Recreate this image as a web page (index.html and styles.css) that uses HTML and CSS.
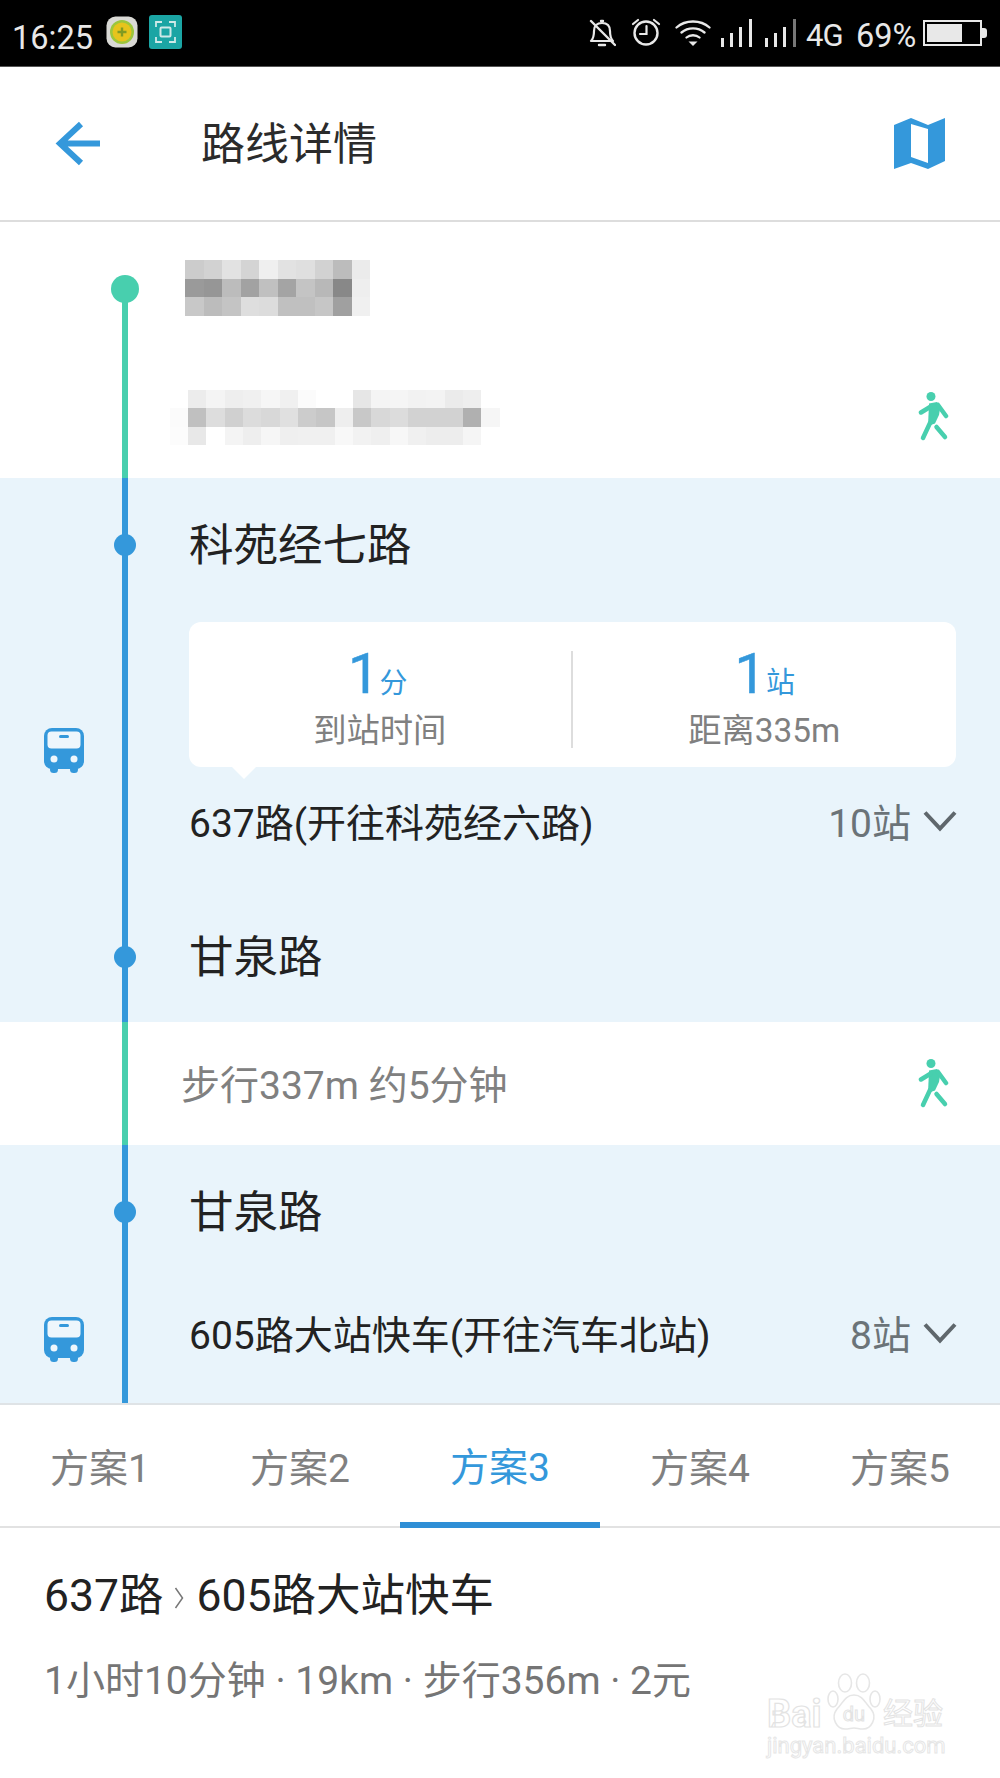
FILE: index.html
```html
<!DOCTYPE html>
<html lang="zh-CN">
<head>
<meta charset="utf-8">
<title>路线详情</title>
<link rel="stylesheet" href="styles.css">
</head>
<body>
<div class="phone">
  <div class="statusbar">
    <div class="status-left">
      <span class="clock">16:25</span>
      <svg class="app-icon app-360" viewBox="0 0 32 32"><rect x="0.5" y="0.5" width="31" height="31" rx="9" fill="#d9d9d5"/><circle cx="16" cy="16" r="12" fill="#9cc63c"/><circle cx="16" cy="16" r="9.5" fill="#e6c41c"/><path d="M16 11.5v9M11.5 16h9" stroke="#7f9a22" stroke-width="2.4"/></svg>
      <svg class="app-icon app-scan" viewBox="0 0 33 34"><rect width="33" height="34" rx="3" fill="#1ba5a4"/><path d="M7 12V7h6M20 7h6v5M26 22v5h-6M13 27H7v-5" fill="none" stroke="#cfe9e8" stroke-width="1.8"/><rect x="11.5" y="12.5" width="10" height="9" rx="1" fill="none" stroke="#cfe9e8" stroke-width="2"/></svg>
    </div>
    <div class="status-right">
      <svg class="st-icon st-bell" viewBox="0 0 28 30"><path d="M3 23c3-3 3-6 3-10 0-5 3-8 8-8s8 3 8 8c0 4 0 7 3 10z" fill="none" stroke="#e8e8e8" stroke-width="2.2" stroke-linejoin="round"/><path d="M11 27h6M13 3h2M3 3l24 24" stroke="#e8e8e8" stroke-width="2.4" stroke-linecap="round"/></svg>
      <svg class="st-icon st-alarm" viewBox="0 0 30 30"><circle cx="15" cy="16" r="11.5" fill="none" stroke="#e8e8e8" stroke-width="2.4"/><path d="M15.500 9v8H9M2 7l5-4M28 7l-5-4" fill="none" stroke="#e8e8e8" stroke-width="2.2" stroke-linecap="round"/></svg>
      <svg class="st-icon st-wifi" viewBox="0 0 36 28"><path d="M1.500 9.500C10.500 1.500 25.500 1.500 34.500 9.500M6.500 14.500C13 9 23 9 29.500 14.500M11.500 19.500c3.500-3 9.500-3 13 0" fill="none" stroke="#e8e8e8" stroke-width="2.300" stroke-linecap="round"/><path d="M13.500 23.500h9L18 28z" fill="#e8e8e8"/></svg>
      <svg class="st-icon st-signal" viewBox="0 0 32 28"><path d="M0 19h3v9H0zM9 14h3v14H9zM18 8h3v20h-3zM28 0h3v28h-3z" fill="#e8e8e8"/></svg>
      <svg class="st-icon st-signal2" viewBox="0 0 32 28"><path d="M0 19h3v9H0zM9 14h3v14H9zM18 8h3v20h-3z" fill="#e8e8e8"/><path d="M28 0h3v28h-3z" fill="#777"/></svg>
      <span class="st-net">4G</span>
      <span class="st-batt">69%</span>
      <div class="battery"><div class="battery-level"></div></div>
      <div class="battery-nub"></div>
    </div>
  </div>

  <header class="topbar">
    <svg class="back" viewBox="0 0 46 46"><path d="M45 22.500H5M26 3 5 22.500 26 42" fill="none" stroke="#3498db" stroke-width="6"/></svg>
    <h1 class="title">路线详情</h1>
    <svg class="map-icon" viewBox="0 0 51 51"><path fill-rule="evenodd" fill="#3498db" d="M0 7 17 0l17 7 17-7v43l-17 8-17-6-17 6zM17 6v33l17 6V11z"/></svg>
  </header>

  <section class="leg leg-walk">
    <div class="rail rail-green rail-from-dot"></div>
    <div class="row row-start">
      <div class="gutter"><span class="dot dot-start"></span></div>
      <svg class="mosaic mosaic-a" viewBox="0 0 10 3" shape-rendering="crispEdges">
        <rect x="0" y="0" width="1" height="1" fill="#ccc"/><rect x="1" y="0" width="1" height="1" fill="#d2d2d2"/><rect x="2" y="0" width="1" height="1" fill="#e2e2e2"/><rect x="3" y="0" width="1" height="1" fill="#d4d4d4"/><rect x="4" y="0" width="1" height="1" fill="#efefef"/><rect x="5" y="0" width="1" height="1" fill="#e2e2e2"/><rect x="6" y="0" width="1" height="1" fill="#dfdfdf"/><rect x="7" y="0" width="1" height="1" fill="#d2d2d2"/><rect x="8" y="0" width="1" height="1" fill="#bcbcbc"/><rect x="9" y="0" width="1" height="1" fill="#ebebeb"/>
        <rect x="0" y="1" width="1" height="1" fill="#9a9a9a"/><rect x="1" y="1" width="1" height="1" fill="#969696"/><rect x="2" y="1" width="1" height="1" fill="#bcbcbc"/><rect x="3" y="1" width="1" height="1" fill="#a2a2a2"/><rect x="4" y="1" width="1" height="1" fill="#c0c0c0"/><rect x="5" y="1" width="1" height="1" fill="#a4a4a4"/><rect x="6" y="1" width="1" height="1" fill="#c4c4c4"/><rect x="7" y="1" width="1" height="1" fill="#b8b8b8"/><rect x="8" y="1" width="1" height="1" fill="#888"/><rect x="9" y="1" width="1" height="1" fill="#eee"/>
        <rect x="0" y="2" width="1" height="1" fill="#c8c8c8"/><rect x="1" y="2" width="1" height="1" fill="#bcbcbc"/><rect x="2" y="2" width="1" height="1" fill="#c4c4c4"/><rect x="3" y="2" width="1" height="1" fill="#dedede"/><rect x="4" y="2" width="1" height="1" fill="#dcdcdc"/><rect x="5" y="2" width="1" height="1" fill="#c0c0c0"/><rect x="6" y="2" width="1" height="1" fill="#c0c0c0"/><rect x="7" y="2" width="1" height="1" fill="#c6c6c6"/><rect x="8" y="2" width="1" height="1" fill="#a0a0a0"/><rect x="9" y="2" width="1" height="1" fill="#f0f0f0"/>
      </svg>
    </div>
    <div class="row row-place">
      <svg class="mosaic mosaic-b" viewBox="0 0 18 3" shape-rendering="crispEdges">
        <rect x="1" y="0" width="1" height="1" fill="#ececec"/><rect x="2" y="0" width="1" height="1" fill="#f4f4f4"/><rect x="3" y="0" width="1" height="1" fill="#eee"/><rect x="4" y="0" width="1" height="1" fill="#f0f0f0"/><rect x="5" y="0" width="1" height="1" fill="#f6f6f6"/><rect x="6" y="0" width="1" height="1" fill="#f0f0f0"/><rect x="7" y="0" width="1" height="1" fill="#fbfbfb"/><rect x="10" y="0" width="1" height="1" fill="#e6e6e6"/><rect x="11" y="0" width="1" height="1" fill="#f4f4f4"/><rect x="12" y="0" width="1" height="1" fill="#f5f5f5"/><rect x="13" y="0" width="1" height="1" fill="#f2f2f2"/><rect x="14" y="0" width="1" height="1" fill="#f3f3f3"/><rect x="15" y="0" width="1" height="1" fill="#ebebeb"/><rect x="16" y="0" width="1" height="1" fill="#eee"/>
        <rect x="0" y="1" width="1" height="1" fill="#fbfbfb"/><rect x="1" y="1" width="1" height="1" fill="#c0c0c0"/><rect x="2" y="1" width="1" height="1" fill="#ddd"/><rect x="3" y="1" width="1" height="1" fill="#d0d0d0"/><rect x="4" y="1" width="1" height="1" fill="#dcdcdc"/><rect x="5" y="1" width="1" height="1" fill="#d8d8d8"/><rect x="6" y="1" width="1" height="1" fill="#e0e0e0"/><rect x="7" y="1" width="1" height="1" fill="#ccc"/><rect x="8" y="1" width="1" height="1" fill="#c6c6c6"/><rect x="9" y="1" width="1" height="1" fill="#eee"/><rect x="10" y="1" width="1" height="1" fill="#c8c8c8"/><rect x="11" y="1" width="1" height="1" fill="#d8d8d8"/><rect x="12" y="1" width="1" height="1" fill="#dcdcdc"/><rect x="13" y="1" width="1" height="1" fill="#d2d2d2"/><rect x="14" y="1" width="1" height="1" fill="#d2d2d2"/><rect x="15" y="1" width="1" height="1" fill="#d2d2d2"/><rect x="16" y="1" width="1" height="1" fill="#b0b0b0"/><rect x="17" y="1" width="1" height="1" fill="#f6f6f6"/>
        <rect x="0" y="2" width="1" height="1" fill="#fcfcfc"/><rect x="1" y="2" width="1" height="1" fill="#e8e8e8"/><rect x="3" y="2" width="1" height="1" fill="#f4f4f4"/><rect x="4" y="2" width="1" height="1" fill="#eee"/><rect x="5" y="2" width="1" height="1" fill="#f6f6f6"/><rect x="6" y="2" width="1" height="1" fill="#efefef"/><rect x="7" y="2" width="1" height="1" fill="#f0f0f0"/><rect x="8" y="2" width="1" height="1" fill="#f0f0f0"/><rect x="9" y="2" width="1" height="1" fill="#f8f8f8"/><rect x="10" y="2" width="1" height="1" fill="#f2f2f2"/><rect x="11" y="2" width="1" height="1" fill="#efefef"/><rect x="12" y="2" width="1" height="1" fill="#f7f7f7"/><rect x="13" y="2" width="1" height="1" fill="#f0f0f0"/><rect x="14" y="2" width="1" height="1" fill="#ededed"/><rect x="15" y="2" width="1" height="1" fill="#ededed"/><rect x="16" y="2" width="1" height="1" fill="#f5f5f5"/>
      </svg>
      <svg class="walker" viewBox="0 0 31 50"><use href="#walk-figure"/></svg>
    </div>
  </section>

  <section class="leg leg-bus leg-bus-a">
    <div class="rail rail-blue"></div>
    <div class="row row-station">
      <div class="gutter"><span class="dot"></span></div>
      <span class="station">科苑经七路</span>
    </div>
    <div class="transit">
      <div class="gutter gutter-bus">
        <svg class="bus" viewBox="0 0 40 45"><use href="#bus-figure"/></svg>
      </div>
      <div class="transit-body">
        <div class="card">
          <div class="card-cell">
            <div class="metric"><span class="metric-num">1</span><span class="metric-unit">分</span></div>
            <div class="metric-label">到站时间</div>
          </div>
          <div class="card-divider"></div>
          <div class="card-cell">
            <div class="metric"><span class="metric-num">1</span><span class="metric-unit">站</span></div>
            <div class="metric-label">距离335m</div>
          </div>
        </div>
        <div class="route">
          <span class="route-name">637路(开往科苑经六路)</span>
          <span class="route-stops">10站</span>
          <svg class="chev" viewBox="0 0 34 22"><path d="M2 2.500l15 16 15-16" fill="none" stroke="#5f676c" stroke-width="4"/></svg>
        </div>
      </div>
    </div>
    <div class="row row-station row-station-end">
      <div class="gutter"><span class="dot"></span></div>
      <span class="station">甘泉路</span>
    </div>
  </section>

  <section class="leg leg-walk leg-walk-mid">
    <div class="rail rail-green"></div>
    <div class="row row-walk">
      <span class="walk-text">步行337m 约5分钟</span>
      <svg class="walker" viewBox="0 0 31 50"><use href="#walk-figure"/></svg>
    </div>
  </section>

  <section class="leg leg-bus leg-bus-b">
    <div class="rail rail-blue"></div>
    <div class="row row-station row-station-b">
      <div class="gutter"><span class="dot"></span></div>
      <span class="station">甘泉路</span>
    </div>
    <div class="transit transit-b">
      <div class="gutter gutter-bus">
        <svg class="bus" viewBox="0 0 40 45"><use href="#bus-figure"/></svg>
      </div>
      <div class="transit-body">
        <div class="route route-b">
          <span class="route-name">605路大站快车(开往汽车北站)</span>
          <span class="route-stops">8站</span>
          <svg class="chev" viewBox="0 0 34 22"><path d="M2 2.500l15 16 15-16" fill="none" stroke="#5f676c" stroke-width="4"/></svg>
        </div>
      </div>
    </div>
  </section>

  <nav class="tabs">
    <div class="tab">方案1</div>
    <div class="tab">方案2</div>
    <div class="tab tab-active">方案3</div>
    <div class="tab">方案4</div>
    <div class="tab">方案5</div>
  </nav>

  <footer class="summary">
    <div class="summary-title"><span>637路</span><svg class="summary-sep" viewBox="0 0 10 24"><path d="M1.500 2l7 10-7 10" fill="none" stroke="#777" stroke-width="1.500"/></svg><span>605路大站快车</span></div>
    <div class="summary-sub">1小时10分钟 · 19km · 步行356m · 2元</div>
    <div class="watermark">
      <div class="wm-top">
        <span class="wm-text">Bai</span>
        <svg class="wm-paw" viewBox="0 0 54 58"><g fill="#fff" stroke="#e6e6e6" stroke-width="1.600"><ellipse cx="6" cy="26" rx="5" ry="8"/><ellipse cx="18" cy="10" rx="6.500" ry="9"/><ellipse cx="36" cy="10" rx="6.500" ry="9"/><ellipse cx="48" cy="26" rx="5" ry="8"/><path d="M27 22c9 0 11 8 17 14 7 9 0 20-8 20-4 0-6-1-9-1s-5 1-9 1c-8 0-15-11-8-20 6-6 8-14 17-14z"/></g><text x="27" y="48" text-anchor="middle" class="wm-du">du</text></svg>
        <span class="wm-text wm-cjk">经验</span>
      </div>
      <div class="wm-url">jingyan.baidu.com</div>
    </div>
  </footer>
</div>

<svg class="defs" width="0" height="0">
  <defs>
    <g id="bus-figure">
      <rect x="0" y="0" width="40" height="41" rx="8" fill="#3498db"/>
      <rect x="3.500" y="3.500" width="33" height="17" rx="4" fill="#eef6fc"/>
      <rect x="15" y="7" width="10" height="3" rx="1.500" fill="#3498db"/>
      <circle cx="10" cy="31" r="3.500" fill="#eef6fc"/>
      <circle cx="30" cy="31" r="3.500" fill="#eef6fc"/>
      <rect x="6" y="38" width="8" height="7" rx="3.500" fill="#3498db"/>
      <rect x="26" y="38" width="8" height="7" rx="3.500" fill="#3498db"/>
    </g>
    <g id="walk-figure" fill="#48cfae">
      <circle cx="13" cy="4.500" r="4.500"/>
      <path d="M11 11.500 19 10 22.500 14 21 23 17 31.500 10 34z"/>
      <g fill="none" stroke="#48cfae" stroke-linecap="round" stroke-width="4.500">
        <path d="M12 15 3 20.500"/>
        <path d="M20 13l8 11"/>
        <path d="M12 31 5 46"/>
        <path d="M18.500 35 27 45"/>
      </g>
    </g>
  </defs>
</svg>
</body>
</html>
```
FILE: styles.css
```css
* { box-sizing: border-box; }
html, body { margin: 0; padding: 0; background: #fff; }
body {
  font-family: Roboto, "Noto Sans CJK SC", sans-serif;
  color: #222;
}
.phone { width: 1000px; height: 1778px; overflow: hidden; display: flex; flex-direction: column; }
.defs { display: block; height: 0; }

/* status bar */
.statusbar {
  height: 67px; background: #000; border-bottom: 1px solid #555;
  display: flex; align-items: center; justify-content: space-between;
  color: #e8e8e8; padding: 0 13px 2px 12px; flex: none;
}
.status-left, .status-right { display: flex; align-items: center; }
.clock { font-size: 32.500px; width: 94px; margin-top: 11px; }
.app-icon { display: block; }
.app-360 { width: 32px; height: 32px; margin-right: 11px; }
.app-scan { width: 33px; height: 34px; }
.st-icon { display: block; }
.st-bell { width: 28px; height: 30px; margin-top: 1px; margin-left: -2px; margin-right: 15px; }
.st-alarm { width: 30px; height: 30px; margin-right: 14px; }
.st-wifi { width: 36px; height: 28px; margin-right: 10px; }
.st-signal { width: 32px; height: 28px; margin-top: 2px; margin-right: 12px; }
.st-signal2 { width: 32px; height: 28px; margin-top: 2px; margin-right: 9px; }
.st-net { font-size: 31px; width: 50px; margin-top: 6px; letter-spacing: -1px; }
.st-batt { font-size: 32.500px; width: 67px; margin-top: 7px; }
.battery { width: 59px; height: 26px; border: 2px solid #e8e8e8; padding: 2px; margin-top: 2px; }
.battery-level { width: 69%; height: 100%; background: #e8e8e8; }
.battery-nub { width: 5px; height: 10px; background: #e8e8e8; border-radius: 0 3px 3px 0; margin-top: 2px; }

/* header */
.topbar {
  height: 155px; border-bottom: 2px solid #ddd; flex: none;
  display: flex; align-items: center; padding: 0 55px 0 55px;
}
.back { width: 46px; height: 46px; display: block; margin-right: 100px; }
.title { font-size: 44px; font-weight: 400; margin: 0 0 6px; color: #2b2b2b; flex: 1; }
.map-icon { width: 51px; height: 51px; display: block; }

/* route legs */
.leg { position: relative; flex: none; }
.rail { position: absolute; left: 122px; width: 6px; top: 0; bottom: 0; }
.rail-green { background: #48cfae; }
.rail-blue { background: #3498db; }
.rail-from-dot { top: 67px; }
.leg-bus { background: #e9f4fb; }
.leg-bus-a { height: 544px; }
.leg-bus-b { height: 258px; }
.leg-walk-mid { height: 123px; }
.row { display: flex; align-items: center; position: relative; }
.gutter { width: 189px; flex: none; display: flex; align-items: center; }
.row-start { height: 134px; }
.row-start .mosaic-a { margin-left: -4px; margin-top: -3px; }
.row-place { height: 122px; padding-right: 51px; justify-content: space-between; padding-left: 168px; }
.mosaic { display: block; }
.mosaic-a { width: 185px; height: 56px; }
.mosaic-b { width: 333px; height: 55px; }
.walker { width: 31px; height: 50px; display: block; }
.dot { width: 22px; height: 22px; border-radius: 50%; background: #3498db; margin-left: 114px; margin-top: 1px; }
.dot-start { width: 28px; height: 28px; background: #48cfae; margin-left: 111px; margin-top: 0; }
.row-station { height: 132px; }
.row-station-end { height: 132px; margin-top: 11px; }
.row-station-b { height: 134px; }
.row-station-b .dot { margin-top: -1px; }
.station { font-size: 44.500px; color: #222; margin-bottom: 5px; }
.row-station-b .station { margin-bottom: 7px; }

/* transit block */
.transit { display: flex; margin-top: 12px; height: 257px; position: relative; }
.gutter-bus { padding-left: 44px; }
.bus { width: 40px; height: 45px; display: block; }
.transit-body { flex: 1; padding-right: 44px; }
.card {
  height: 145px; background: #fff; border-radius: 12px; display: flex; align-items: center;
  position: relative; margin-bottom: 12px;
}
.card::after {
  content: ""; position: absolute; left: 43px; bottom: -12px;
  border-left: 12px solid transparent; border-right: 12px solid transparent; border-top: 12px solid #fff;
}
.card-cell { flex: 1; text-align: center; padding-top: 2px; }
.card-divider { width: 2px; height: 97px; background: #ddd; margin-top: 10px; margin-left: -1px; margin-right: 1px; }
.metric { display: flex; align-items: baseline; justify-content: center; height: 70px; line-height: 70px; color: #3498db; }
.metric-num { font-size: 56px; font-weight: 400; margin-right: 0; -webkit-text-stroke: 0.5px #3498db; }
.metric-unit { font-size: 28px; }
.card-cell:first-child .metric { padding-right: 5px; }
.card-cell:last-child .metric-unit { font-size: 29px; }
.metric-label { font-size: 33.300px; line-height: 44px; color: #808080; margin-left: -1px; }
.route { display: flex; align-items: center; height: 90px; }
.route-name { font-size: 39px; flex: 1; color: #222; margin-bottom: 8px; }
.route-stops { font-size: 39px; color: #6b7378; margin-right: 12px; margin-bottom: 8px; }
.chev { width: 34px; height: 22px; display: block; margin-top: -7px; margin-right: -1px; }
.transit-b { margin-top: 0; height: 124px; }
.transit-b .gutter-bus { padding-bottom: 4px; }
.route-b { height: 114px; }

/* mid walk */
.row-walk { height: 123px; padding: 0 51px 0 181px; justify-content: space-between; }
.walk-text { font-size: 39px; color: #808080; margin-bottom: 4px; }

/* tabs */
.tabs {
  height: 125px; flex: none; display: flex; border-top: 2px solid #dfe3e6; border-bottom: 2px solid #e2e2e2;
}
.tab { flex: 1; display: flex; align-items: center; justify-content: center; font-size: 39px; color: #808080; margin-bottom: -2px; padding-bottom: 3px; }
.tab-active { color: #3498db; border-bottom: 6px solid #2f8fd6; padding-bottom: 0; }

/* summary */
.summary { position: relative; flex: 1; padding: 38px 44px 0; }
.summary-title { display: flex; align-items: center; font-size: 44.500px; line-height: 60px; color: #222; }
.summary-sep { width: 10px; height: 24px; margin: 4px 13px 0 10px; display: block; }
.summary-sub { font-size: 39px; line-height: 56px; color: #757575; margin-top: 27px; }

/* watermark */
.watermark { position: absolute; left: 767px; top: 144px; width: 180px; }
.wm-top { display: flex; align-items: flex-end; height: 59px; }
.wm-text { font-size: 38px; line-height: 34px; color: #fff; -webkit-text-stroke: 1.200px #e3e3e3; font-weight: 700; width: 60px; }
.wm-paw { width: 54px; height: 58px; display: block; margin-right: 2px; }
.wm-du { font-size: 20px; fill: #fff; stroke: #e3e3e3; stroke-width: 1; font-family: Roboto, sans-serif; }
.wm-cjk { font-size: 30px; width: 62px; font-weight: 400; -webkit-text-stroke: 1px #e3e3e3; }
.wm-url { font-size: 22px; line-height: 26px; color: #fff; -webkit-text-stroke: 1px #e6e6e6; white-space: nowrap; margin-top: 2px; }
```
